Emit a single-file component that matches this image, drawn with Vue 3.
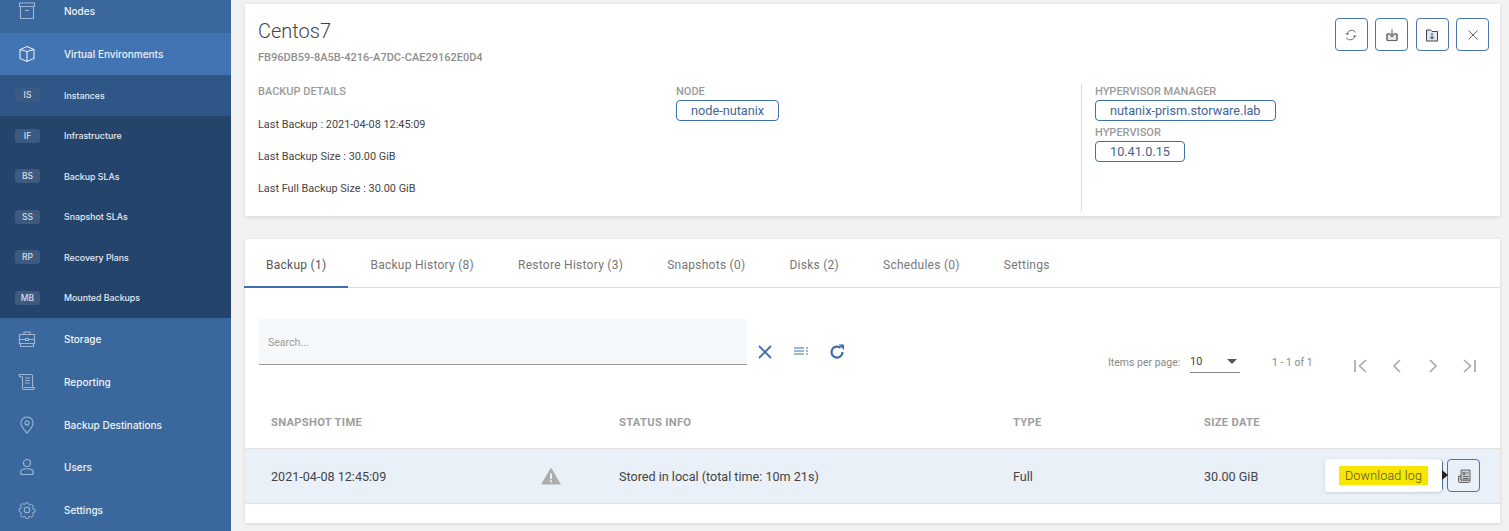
<script setup>
const subItems = [
  { tag: 'IS', label: 'Instances', current: true },
  { tag: 'IF', label: 'Infrastructure' },
  { tag: 'BS', label: 'Backup SLAs' },
  { tag: 'SS', label: 'Snapshot SLAs' },
  { tag: 'RP', label: 'Recovery Plans' },
  { tag: 'MB', label: 'Mounted Backups' },
]
const tabs = ['Backup (1)', 'Backup History (8)', 'Restore History (3)', 'Snapshots (0)', 'Disks (2)', 'Schedules (0)', 'Settings']
</script>

<template>
  <div class="page">
    <aside class="side">
      <div class="nav-list">
        <div class="nav-item">
          <svg class="nav-ico" viewBox="0 0 18 18"><path d="M1.500 1h15v3.500h-15zM2.500 4.500V16.500h13V4.500M7 8.500h4" /></svg>
          <span>Nodes</span>
        </div>
        <div class="nav-item active">
          <svg class="nav-ico bright" viewBox="0 0 18 18"><path d="M9 1.500 16 4.500v9L9 16.500 2 13.500v-9zM2 4.500 9 6.500l7-2M9 6.500v10" /></svg>
          <span>Virtual Environments</span>
        </div>
        <div class="sub-list">
          <div v-for="s in subItems" :key="s.tag" class="sub-item" :class="{ current: s.current }">
            <span class="sub-tag">{{ s.tag }}</span>
            <span>{{ s.label }}</span>
          </div>
        </div>
        <div class="nav-item">
          <svg class="nav-ico" viewBox="0 0 18 18"><path d="M1.500 4.500h15v9h-15zM6 4.500V2h6v2.500M2.500 13.500v3h13v-3M1.500 9.500H7.500M10.500 9.500h6M7.500 8.500h3v2h-3z" /></svg>
          <span>Storage</span>
        </div>
        <div class="nav-item">
          <svg class="nav-ico" viewBox="0 0 18 18"><path d="M1 1.500h12c1 0 1.500.6 1.500 1.500v11.500M1 1.500c0 1.500.5 2.500 2.500 2.500h1v10.500M6 14.500h10.500c0 1.200-.6 2-1.500 2H6c-1 0-1.500-.8-1.500-2M7 5h5M7 7.500h5M7 10h5" /></svg>
          <span>Reporting</span>
        </div>
        <div class="nav-item">
          <svg class="nav-ico" viewBox="0 0 18 18"><path d="M9 1C5.500 1 3 3.600 3 7c0 3.500 3.500 7.500 6 10 2.500-2.500 6-6.500 6-10 0-3.400-2.500-6-6-6z" /><circle cx="9" cy="7" r="2" /></svg>
          <span>Backup Destinations</span>
        </div>
        <div class="nav-item">
          <svg class="nav-ico" viewBox="0 0 18 18"><circle cx="9" cy="5" r="3.500" /><path d="M2.500 14.500c0-2.500 2.500-3.800 6.500-3.800s6.500 1.300 6.500 3.800c0 1.400-1 2-2.500 2H5c-1.500 0-2.500-.6-2.500-2z" /></svg>
          <span>Users</span>
        </div>
        <div class="nav-item">
          <svg class="nav-ico" viewBox="0 0 18 18"><circle cx="9" cy="9" r="2.800" /><path d="M7.600 1h2.800l.5 2.200 1.500.6 1.900-1.200 2 2-1.200 1.900.6 1.500 2.200.5v2.800l-2.200.5-.6 1.500 1.200 1.900-2 2-1.900-1.200-1.500.6-.5 2.200H7.600l-.5-2.200-1.500-.6-1.900 1.200-2-2 1.200-1.900-.6-1.500L.1 10.400V7.600l2.200-.5.6-1.500-1.200-1.900 2-2 1.900 1.200 1.500-.6z" transform="translate(.9 .9) scale(.9)" /></svg>
          <span>Settings</span>
        </div>
      </div>
    </aside>

    <main class="content">
      <section class="card head-card">
        <div class="head-top">
          <div>
            <h1 class="vm-name">Centos7</h1>
            <p class="vm-id">FB96DB59-8A5B-4216-A7DC-CAE29162E0D4</p>
          </div>
          <div class="head-actions">
            <button class="icon-btn">
              <svg viewBox="0 0 16 16" class="btn-ico"><path d="M12.500 5.500C12 4 10 3 8.500 3.200 6 3.500 4.500 5 4 7.500M3.500 10.500C4 12 6 13 7.500 12.800 10 12.500 11.500 11 12 8.500M4 7.500 2.700 6.200M4 7.500 5.800 6.500M12 8.500l1.300 1.300M12 8.500l-1.800 1" /></svg>
            </button>
            <button class="icon-btn">
              <svg viewBox="0 0 16 16" class="btn-ico"><path d="M3 7h10v6.500H3z" class="tint" /><path d="M5.500 7H3v6.500h10V7h-2.500M8 2v8M6 8l2 2 2-2" /></svg>
            </button>
            <button class="icon-btn">
              <svg viewBox="0 0 16 16" class="btn-ico dark"><path d="M2.500 3h4L8 4.500h5.500v9.500h-11z" class="tint" /><path d="M8 6v6M6 10l2 2 2-2" /></svg>
            </button>
            <button class="icon-btn">
              <svg viewBox="0 0 16 16" class="btn-ico"><path d="m3.500 3.500 9 9M12.500 3.500l-9 9" /></svg>
            </button>
          </div>
        </div>
        <div class="details">
          <div class="det-col">
            <div class="det-label">BACKUP DETAILS</div>
            <p class="det-line">Last Backup : 2021-04-08 12:45:09</p>
            <p class="det-line">Last Backup Size : 30.00 GiB</p>
            <p class="det-line">Last Full Backup Size : 30.00 GiB</p>
          </div>
          <div class="det-col">
            <div class="det-label">NODE</div>
            <span class="chip node-chip">node-nutanix</span>
          </div>
          <div class="det-col hyper">
            <div class="det-label">HYPERVISOR MANAGER</div>
            <span class="chip">nutanix-prism.storware.lab</span>
            <div class="det-label second">HYPERVISOR</div>
            <span class="chip ip-chip">10.41.0.15</span>
          </div>
        </div>
      </section>

      <section class="card list-card">
        <nav class="tabs">
          <span v-for="(t, i) in tabs" :key="t" class="tab" :class="{ on: i === 0 }">{{ t }}</span>
        </nav>

        <div class="toolbar">
          <div class="search-box">Search...</div>
          <div class="tool-icons">
            <svg viewBox="0 0 16 16" class="tool-ico"><path d="m2 2 12 12M14 2 2 14" stroke-width="1.800" /></svg>
            <svg viewBox="0 0 16 16" class="tool-ico"><path d="M1 4h10M1 7h10M1 10h10M13 4h2M13 7h2M13 10h2" stroke-width="1.200" /></svg>
            <svg viewBox="0 0 16 16" class="tool-ico"><path d="M13.500 8A5.500 5.500 0 1 1 11.500 3.800" stroke-width="2.200" /><path d="M9.500 .5h5.500v5.500z" class="solid" /></svg>
          </div>
          <div class="pager">
            <span class="pager-label">Items per page:</span>
            <div class="pager-select"><span>10</span><i class="caret"></i></div>
            <span class="pager-range">1 - 1 of 1</span>
            <div class="pager-btns">
              <svg viewBox="0 0 16 16"><path d="M2 2v12M13 2 6.500 8l6.500 6" /></svg>
              <svg viewBox="0 0 16 16"><path d="M11 2 5 8l6 6" /></svg>
              <svg viewBox="0 0 16 16"><path d="m5 2 6 6-6 6" /></svg>
              <svg viewBox="0 0 16 16"><path d="M14 2v12M3 2l6.500 6L3 14" /></svg>
            </div>
          </div>
        </div>

        <div class="grid-row grid-head">
          <span>SNAPSHOT TIME</span>
          <span></span>
          <span>STATUS INFO</span>
          <span>TYPE</span>
          <span>SIZE DATE</span>
        </div>
        <div class="grid-row grid-body">
          <span>2021-04-08 12:45:09</span>
          <svg class="warn" viewBox="0 0 20 18"><path d="M10 .5 20 17.500H0z" fill="#acacac" /><path d="M9 6.500h2v5.500H9zM9 13.300h2v2H9z" fill="#eaf0f8" /></svg>
          <span>Stored in local (total time: 10m 21s)</span>
          <span>Full</span>
          <span>30.00 GiB</span>
          <div class="row-actions">
            <button class="icon-btn ghost"></button>
            <button class="icon-btn log-btn">
              <svg viewBox="0 0 16 16" class="btn-ico"><path d="M2.500 8v5.500c0 .5.400 1 1 1h9c.5 0 1-.5 1.500-1V12H5V8z" class="tint-grey" /><path d="M5 2h9v10H5z" class="tint-grey" /><path d="M7 4.500h2v2H7zM10.500 5H12.500M7 8.500h5.500M7 10.500h5.500" /></svg>
            </button>
            <div class="tip">
              <span class="tip-text">Download log</span>
              <i class="tip-arrow"></i>
            </div>
          </div>
        </div>
      </section>
    </main>
  </div>
</template>

<style>
html, body { margin: 0; background: #f2f2f2; overflow: hidden; }
</style>

<style scoped>
.page {
  display: flex;
  width: 1509px;
  height: 531px;
  overflow: hidden;
  background: #f2f2f2;
  font-family: Roboto, "Liberation Sans", sans-serif;
  color: #444;
}

/* sidebar */
.side {
  width: 231px;
  flex-shrink: 0;
  background: #3a689d;
  overflow: hidden;
}
.nav-list { margin-top: -10px; }
.nav-item {
  display: flex;
  align-items: center;
  height: 42.6px;
  padding-left: 18px;
  font-family: Inter, Roboto, sans-serif;
  font-size: 10px;
  font-weight: 500;
  color: #eef3f8;
}
.nav-item.active { background: #4273b3; height: 42.5px; }
.nav-ico {
  width: 18px;
  height: 18px;
  margin-right: 28px;
  fill: none;
  stroke: #9db6d3;
  stroke-width: 1.100;
}
.nav-ico.bright { stroke: #e6eef6; }
.sub-list { background: #25446b; }
.sub-item {
  display: flex;
  align-items: center;
  height: 40.500px;
  padding-left: 15px;
  font-family: Inter, Roboto, sans-serif;
  font-size: 8.800px;
  font-weight: 500;
  color: #e4ecf4;
}
.sub-item.current { background: #2e5787; }
.sub-tag {
  width: 25px;
  height: 14px;
  margin-right: 24px;
  border-radius: 3px;
  background: #3d5a80;
  font-size: 8.500px;
  line-height: 14px;
  text-align: center;
  color: #d5dfea;
}

/* cards */
.content {
  flex: 1;
  min-width: 0;
  padding: 4px 9px 0 14px;
  display: flex;
  flex-direction: column;
  gap: 23px;
}
.card {
  background: #fff;
  box-shadow: 0 1px 4px rgba(0, 0, 0, .12);
}
.head-card { height: 212px; flex-shrink: 0; padding: 14px 11px 0 13px; box-sizing: border-box; }
.head-top { display: flex; justify-content: space-between; }
.vm-name {
  margin: 0;
  font-size: 20px;
  font-weight: 300;
  line-height: 26px;
  color: #444;
}
.vm-id {
  margin: 7px 0 0;
  font-size: 11px;
  font-weight: 500;
  line-height: 13px;
  color: #8d8d8d;
}
.head-actions { display: flex; gap: 7.500px; }
.icon-btn {
  width: 33px;
  height: 33px;
  padding: 0;
  display: flex;
  align-items: center;
  justify-content: center;
  background: #fff;
  border: 1.500px solid #4a76ad;
  border-radius: 4px;
}
.btn-ico {
  width: 16px;
  height: 16px;
  fill: none;
  stroke: #666;
  stroke-width: 1;
}
.btn-ico.dark { stroke: #444; }
.btn-ico .tint { fill: #dfe7f1; }
.btn-ico .tint-grey { fill: #c9ced4; }

.details { display: flex; margin-top: 21px; }
.det-col { width: 418px; }
.det-col.hyper {
  flex: 1;
  margin-left: -13px;
  margin-top: -1px;
  padding: 1px 0 0 13px;
  height: 126px;
  border-left: 1px solid #ddd;
}
.det-label {
  margin-bottom: 2px;
  font-size: 11px;
  font-weight: 500;
  line-height: 13px;
  color: #9a9a9a;
}
.det-label.second { margin-top: 4.500px; }
.det-line {
  margin: 19px 0 0;
  font-size: 10.900px;
  line-height: 13px;
  color: #444;
}
.det-label + .det-line { margin-top: 20px; }
.chip {
  display: block;
  width: fit-content;
  height: 21px;
  box-sizing: border-box;
  padding: 0 14px;
  border: 1px solid #3f6fa8;
  border-radius: 4px;
  font-size: 12.700px;
  line-height: 19px;
  color: #3f6496;
}
.ip-chip { width: 90px; }

/* list */
.list-card { height: 284px; flex-shrink: 0; }
.tabs {
  display: flex;
  margin-left: -1px;
  box-sizing: border-box;
  height: 49px;
  border-bottom: 1px solid #ddd;
}
.tab {
  padding: 0 22px;
  font-size: 12px;
  line-height: 52px;
  letter-spacing: .265px;
  color: #777;
}
.tab.on {
  color: #555;
  height: 49px;
  box-sizing: border-box;
  border-bottom: 2px solid #3f6fa8;
}
.toolbar {
  display: flex;
  align-items: flex-start;
  margin: 31px 0 27px 14px;
  height: 46px;
}
.search-box {
  width: 488px;
  height: 46px;
  box-sizing: border-box;
  padding-left: 9px;
  background: #f6f9fc;
  border-bottom: 1px solid #9a9a9a;
  font-size: 10.500px;
  line-height: 47px;
  color: #999;
}
.tool-icons {
  display: flex;
  gap: 20px;
  margin: 25px 0 0 10px;
}
.tool-ico {
  width: 16px;
  height: 16px;
  fill: none;
  stroke: #3f6ea8;
}
.tool-ico .solid { fill: #3f6ea8; stroke: none; }
.pager {
  display: flex;
  align-items: center;
  margin: 31px 0 0 263px;
  height: 24px;
  font-size: 10.500px;
  color: #888;
}
.pager-label { width: 82px; }
.pager-select {
  width: 50px;
  height: 22px;
  box-sizing: border-box;
  display: flex;
  align-items: center;
  justify-content: space-between;
  padding-right: 3px;
  border-bottom: 1px solid #888;
  font-size: 11px;
  color: #444;
}
.caret {
  width: 0;
  height: 0;
  border-left: 5px solid transparent;
  border-right: 5px solid transparent;
  border-top: 5px solid #555;
}
.pager-range { margin-left: 32px; width: 64px; }
.pager-btns { display: flex; gap: 20px; margin: 8px 0 0 17px; }
.pager-btns svg {
  width: 16px;
  height: 16px;
  fill: none;
  stroke: #aaa;
  stroke-width: 1.700;
}

.grid-row {
  display: grid;
  padding-left: 26px;
  align-items: center;
}
.grid-head {
  grid-template-columns: 279px 69px 394px 191px 100px;
  height: 52px;
  padding-top: 4px;
  font-size: 11.200px;
  font-weight: 700;
  color: #9d9d9d;
  letter-spacing: .3px;
  border-bottom: 1px solid #e2e2e2;
}
.grid-body {
  position: relative;
  grid-template-columns: 270px 78px 394px 191px 100px;
  height: 54px;
  background: #eaf0f8;
  border-bottom: 1px solid #e2e2e2;
  font-size: 12.600px;
  color: #444;
}
.warn { width: 20px; height: 18px; }
.row-actions {
  position: absolute;
  right: 20px;
  top: 10px;
  display: flex;
  gap: 4px;
}
.log-btn { background: #eaf0f8; }
.tip {
  position: absolute;
  right: 38px;
  top: 0;
  width: 117px;
  height: 33px;
  background: rgba(255, 255, 255, .94);
  border-radius: 3px;
  box-shadow: 0 1px 3px rgba(0, 0, 0, .15);
  display: flex;
  align-items: center;
  justify-content: center;
}
.tip-text {
  background: #f9e600;
  padding: 2px 6px;
  font-size: 12.500px;
  font-weight: 300;
  letter-spacing: .2px;
  line-height: 15px;
  color: #4f4f30;
}
.tip-arrow {
  position: absolute;
  right: -6px;
  top: 11px;
  width: 0;
  height: 0;
  border-top: 5px solid transparent;
  border-bottom: 5px solid transparent;
  border-left: 6px solid #222;
}
</style>
